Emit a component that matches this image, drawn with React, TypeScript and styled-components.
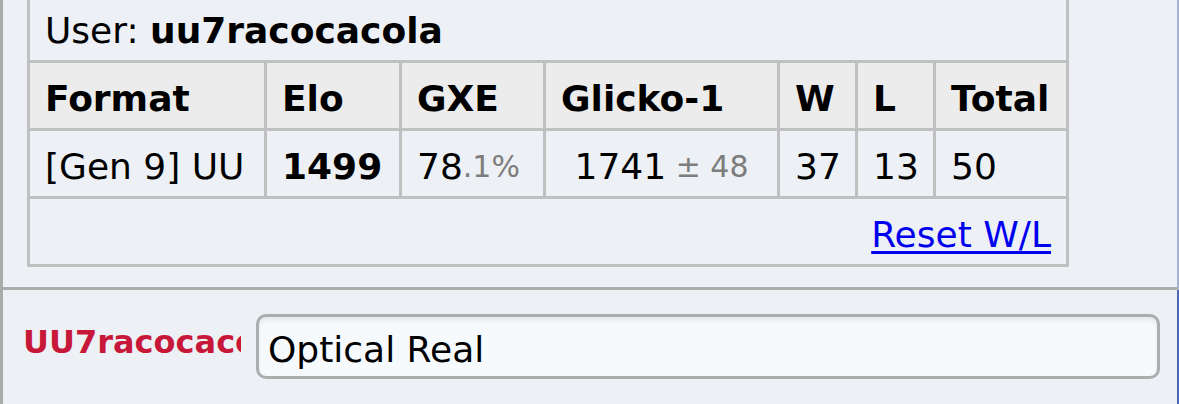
import React from "react";
import styled, { createGlobalStyle, css } from "styled-components";

const GlobalStyle = createGlobalStyle`
  html, body {
    margin: 0;
    padding: 0;
    background: #edf1f5;
    overflow: hidden;
  }
  body {
    font-family: "DejaVu Sans", Verdana, sans-serif;
    color: #000;
  }
`;

const Frame = styled.div`
  width: 1179px;
  height: 404px;
  box-sizing: border-box;
  border-left: 3px solid #ababab;
  display: flex;
  flex-direction: column;
  overflow: hidden;
  background: #edf1f5;
`;

const ChatLog = styled.div`
  flex: none;
  height: 290px;
  box-sizing: border-box;
  padding: 0 0 20px 24px;
  border-bottom: 3px solid #acacac;
  border-right: 2px solid #a6b3d4;
  display: flex;
  flex-direction: column;
  justify-content: flex-end;
`;

const Ladder = styled.div`
  display: grid;
  grid-template-columns: 237px 135px 144px 234px 78px 78px 133px;
  width: max-content;
  border-left: 3px solid #c0c0c0;
  border-top: 3px solid #c0c0c0;
`;

type CellProps = { $head?: boolean; $span?: boolean; $align?: "left" | "center" | "right" };

const Cell = styled.div<CellProps>`
  box-sizing: border-box;
  height: 68px;
  padding: 5px 15px 0;
  border-right: 3px solid #c0c0c0;
  border-bottom: 3px solid #c0c0c0;
  display: flex;
  align-items: center;
  justify-content: ${(p) =>
    p.$align === "center" ? "center" : p.$align === "right" ? "flex-end" : "flex-start"};
  white-space: nowrap;
  overflow: hidden;
  font-size: 36px;
  line-height: normal;
  ${(p) =>
    p.$head &&
    css`
      background: #ececec;
      font-weight: bold;
    `}
  ${(p) =>
    p.$span &&
    css`
      grid-column: 1 / -1;
    `}
`;

const Strong = styled.strong`
  font-weight: bold;
`;

const Muted = styled.small`
  font-size: 30px;
  color: #7d7d7d;
  white-space: pre;
`;

const ResetLink = styled.a`
  color: #0000ee;
  text-decoration: underline;
  text-decoration-thickness: 3px;
  text-underline-offset: 4px;
  cursor: pointer;
`;

const ChatBox = styled.div`
  flex: 1;
  display: flex;
  align-items: flex-start;
  gap: 15px;
  padding: 24px 0 0 20px;
  border-right: 2px solid #4a67b6;
`;

const NameLabel = styled.label`
  flex: none;
  width: 218px;
  margin-top: 9px;
  overflow: hidden;
  white-space: nowrap;
  font-size: 32px;
  line-height: 38px;
  font-weight: bold;
  color: #c8183a;
`;

const TextBox = styled.input`
  flex: none;
  box-sizing: border-box;
  width: 904px;
  height: 65px;
  padding: 6px 9px 0;
  border: 3px solid #acacac;
  border-radius: 10px;
  background: #f7fafc;
  box-shadow: inset 0 3px 5px rgba(0, 0, 0, 0.07);
  font-family: "DejaVu Sans", Verdana, sans-serif;
  font-size: 36px;
  color: #000;
  outline: none;
`;

const headers = ["Format", "Elo", "GXE", "Glicko-1", "W", "L", "Total"];

export default function App() {
  return (
    <>
      <GlobalStyle />
      <Frame>
        <ChatLog>
          <Ladder>
            <Cell $span>
              User:&nbsp;<Strong>uu7racocacola</Strong>
            </Cell>
            {headers.map((h) => (
              <Cell key={h} $head>
                {h}
              </Cell>
            ))}
            <Cell>[Gen 9] UU</Cell>
            <Cell>
              <Strong>1499</Strong>
            </Cell>
            <Cell>
              78<Muted>.1%</Muted>
            </Cell>
            <Cell $align="center">
              1741<Muted> ± 48</Muted>
            </Cell>
            <Cell>37</Cell>
            <Cell>13</Cell>
            <Cell>50</Cell>
            <Cell $span $align="right">
              <ResetLink>Reset W/L</ResetLink>
            </Cell>
          </Ladder>
        </ChatLog>
        <ChatBox>
          <NameLabel>UU7racocacola</NameLabel>
          <TextBox type="text" defaultValue="Optical Real" />
        </ChatBox>
      </Frame>
    </>
  );
}
